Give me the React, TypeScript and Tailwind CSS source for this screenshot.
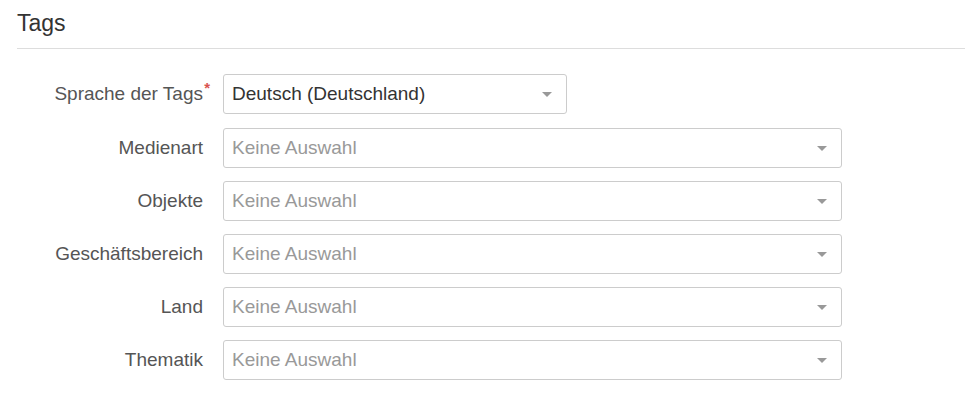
import React from 'react';

const fields = ['Medienart', 'Objekte', 'Geschäftsbereich', 'Land', 'Thematik'];

const Caret = () => (
  <svg className="w-[10px] h-[5px] text-[#999]" viewBox="0 0 10 5" fill="currentColor">
    <path d="M0 0h10L5 5z" />
  </svg>
);

interface SelectProps {
  value?: string;
  width: string;
}

const Select: React.FC<SelectProps> = ({ value, width }) => (
  <div className={`flex items-center justify-between h-[40px] pl-[8px] pr-[14px] border border-[#ccc] rounded-[3px] bg-white ${width}`}>
    <span className={value ? 'text-[#333]' : 'text-[#999]'}>{value ?? 'Keine Auswahl'}</span>
    <Caret />
  </div>
);

const App: React.FC = () => {
  return (
    <div className="w-[965px] h-[402px] bg-white pl-[17px] text-[19px]" style={{ fontFamily: '"Liberation Sans", Arial, sans-serif' }}>
      <div className="h-[49px] border-b border-[#ddd] pt-[8px]">
        <h2 className="text-[23px] leading-[30px] text-[#333]">Tags</h2>
      </div>
      <div className="flex flex-col gap-[13px] mt-[25px]">
        <div className="flex items-center mb-[1px]">
          <label className="w-[186px] text-right text-[#555] relative">
            Sprache der Tags
            <span className="absolute right-[-7px] top-[0px] text-[#d9534f] text-[15px] font-bold leading-none">*</span>
          </label>
          <div className="ml-[20px]">
            <Select value="Deutsch (Deutschland)" width="w-[344px]" />
          </div>
        </div>
        {fields.map((f) => (
          <div key={f} className="flex items-center">
            <label className="w-[186px] text-right text-[#555]">{f}</label>
            <div className="ml-[20px]">
              <Select width="w-[619px]" />
            </div>
          </div>
        ))}
      </div>
    </div>
  );
};

export default App;
